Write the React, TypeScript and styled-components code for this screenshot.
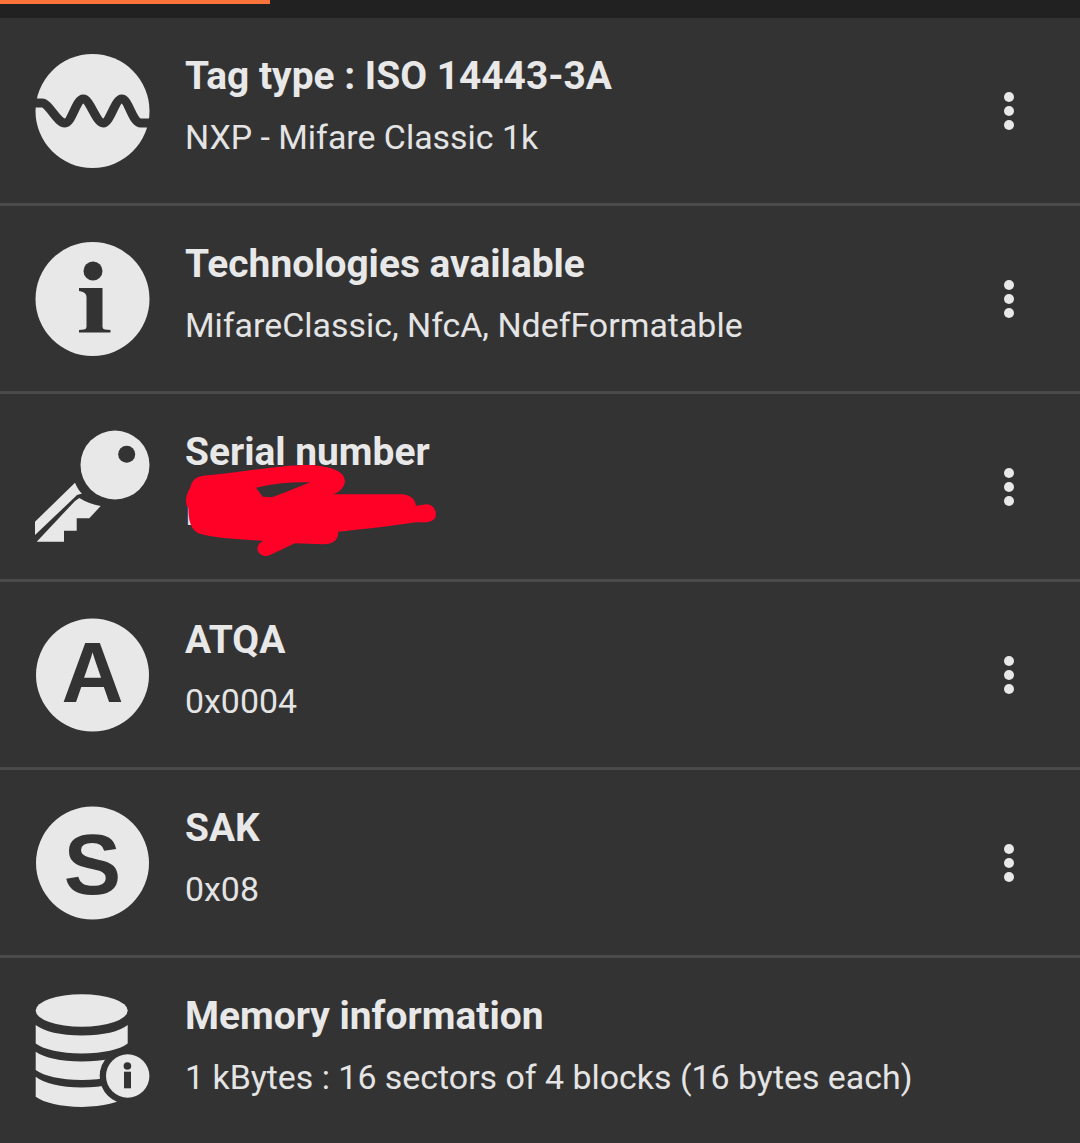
import React from 'react';
import styled, { createGlobalStyle } from 'styled-components';

const ICON_LIGHT = '#e8e8e8';
const BG = '#333333';

const GlobalStyle = createGlobalStyle`
  html, body {
    margin: 0;
    padding: 0;
    background: ${BG};
  }
  * {
    box-sizing: border-box;
  }
`;

const WaveIcon = () => (
  <svg width="116" height="116" viewBox="0 0 116 116">
    <circle cx="57.5" cy="57" r="57" fill={ICON_LIGHT} />
    <path
      d="M-3 49 H7 C14 49 22 69 30 69 C37 69 41 45 48.3 45 C55 45 61 69 68.3 69 C75 69 80 45 86.7 45 C94 45 97 69 106 69 H119"
      fill="none"
      stroke={BG}
      strokeWidth="9"
    />
  </svg>
);

const InfoIcon = () => (
  <svg width="116" height="116" viewBox="0 0 116 116">
    <circle cx="57.5" cy="57" r="57" fill={ICON_LIGHT} />
    <circle cx="58" cy="29" r="9.5" fill={BG} />
    <path
      d="M44 46 H67.5 V85 Q67.5 87 70 87.5 L75.5 88 V90.5 H44 V88 L49 87.5 Q51.5 87 51.5 85 V55 Q51.5 50 44 49 Z"
      fill={BG}
    />
  </svg>
);

const KeyIcon = () => (
  <svg width="116" height="116" viewBox="0 0 116 116">
    <circle cx="80" cy="35" r="34.5" fill={ICON_LIGHT} />
    <circle cx="91.7" cy="24.3" r="8.5" fill={BG} />
    <path d="M0 91.7 L40 52.7 Q43 60 47 63.5 L42 65 L40 67 L0 105 Z" fill={ICON_LIGHT} />
    <path
      d="M1.7 111.7 L40 71 L44.3 68 Q54 74 65.7 76 L54.3 88.3 H41.7 V100.7 H29 V111.7 Z"
      fill={ICON_LIGHT}
    />
  </svg>
);

const LetterIcon = ({ letter, baseline }: { letter: string; baseline: number }) => (
  <svg width="116" height="116" viewBox="0 0 116 116">
    <circle cx="57.5" cy="57" r="56.5" fill={ICON_LIGHT} />
    <text
      x="57.5"
      y={baseline}
      textAnchor="middle"
      fontFamily="'Liberation Sans', Arial, sans-serif"
      fontWeight="700"
      fontSize="86"
      fill={BG}
    >
      {letter}
    </text>
  </svg>
);

const DatabaseIcon = () => (
  <svg width="116" height="116" viewBox="0 0 116 116">
    <ellipse cx="46.7" cy="16.5" rx="46" ry="16.2" fill={ICON_LIGHT} />
    <path d="M0.7 31 Q14 41 46.7 41.5 Q80 41 92.7 31 V49.5 Q80 59 46.7 59.5 Q14 59 0.7 49.5 Z" fill={ICON_LIGHT} />
    <path d="M0.7 57.7 Q14 67 46.7 67.5 Q80 67 92.7 57.7 V76 Q80 85.5 46.7 86 Q14 85.5 0.7 76 Z" fill={ICON_LIGHT} />
    <path d="M0.7 82.7 Q14 93 46.7 93.5 Q80 93 92.7 82.7 V102 Q80 112 46.7 113 Q14 112 0.7 102.7 Z" fill={ICON_LIGHT} />
    <circle cx="92.7" cy="82" r="28" fill={BG} />
    <circle cx="92.7" cy="82" r="21.7" fill={ICON_LIGHT} />
    <circle cx="92.4" cy="72" r="3.8" fill={BG} />
    <rect x="89" y="77.7" width="7" height="16.6" fill={BG} />
  </svg>
);

type Item = {
  icon: React.ReactNode;
  title: string;
  value: string;
  redacted?: boolean;
  noMenu?: boolean;
};

const items: Item[] = [
  { icon: <WaveIcon />, title: 'Tag type : ISO 14443-3A', value: 'NXP - Mifare Classic 1k' },
  { icon: <InfoIcon />, title: 'Technologies available', value: 'MifareClassic, NfcA, NdefFormatable' },
  { icon: <KeyIcon />, title: 'Serial number', value: 'I', redacted: true },
  { icon: <LetterIcon letter="A" baseline={84} />, title: 'ATQA', value: '0x0004' },
  { icon: <LetterIcon letter="S" baseline={88} />, title: 'SAK', value: '0x08' },
  {
    icon: <DatabaseIcon />,
    title: 'Memory information',
    value: '1 kBytes : 16 sectors of 4 blocks (16 bytes each)',
    noMenu: true,
  },
];

const App = () => (
  <>
    <GlobalStyle />
    <Page>
      <TopBar>
        <Progress />
      </TopBar>
      {items.map(item => (
        <Row key={item.title}>
          <IconBox>{item.icon}</IconBox>
          <TextCol>
            <Title>{item.title}</Title>
            <Value>{item.value}</Value>
          </TextCol>
          {!item.noMenu && (
            <Menu>
              <Dot />
              <Dot />
              <Dot />
            </Menu>
          )}
          {item.redacted && (
            <Scribble viewBox="0 0 870 420">
              <path
                fillRule="evenodd"
                d="M60 190 Q65 155 100 152 C200 145 320 120 420 120 C490 125 525 140 525 170 C520 195 500 205 485 208 L700 208 C725 212 735 225 738 242 L770 238 C795 240 802 265 795 280 C785 292 770 293 740 292 C650 305 560 315 505 320 C505 345 490 357 460 358 L375 355 L300 390 C280 400 262 385 262 370 C265 355 275 350 280 348 C200 342 130 340 85 325 C65 315 55 290 55 250 C45 235 45 215 60 190 Z M258 188 C310 175 370 170 420 172 C390 185 340 205 305 217 L278 215 Z"
              />
            </Scribble>
          )}
        </Row>
      ))}
    </Page>
  </>
);

export default App;

const Page = styled.div`
  width: 1080px;
  height: 1143px;
  overflow: hidden;
  background: ${BG};
  font-family: Roboto, 'Liberation Sans', sans-serif;
`;

const TopBar = styled.div`
  height: 18px;
  background: #212121;
`;

const Progress = styled.div`
  width: 270px;
  height: 4px;
  background: #f9733a;
`;

const Row = styled.div`
  position: relative;
  display: flex;
  align-items: center;
  height: 188px;
  padding-left: 35px;
  border-bottom: 3px solid #4a4a4a;

  &:last-child {
    border-bottom-color: transparent;
  }
`;

const IconBox = styled.div`
  display: flex;
  flex: none;
  width: 116px;
  height: 116px;
  margin-top: 3px;
`;

const TextCol = styled.div`
  display: flex;
  flex: 1;
  flex-direction: column;
  gap: 20px;
  margin-left: 34px;
  margin-top: -11px;
`;

const Title = styled.div`
  font-size: 38.9px;
  font-weight: 700;
  line-height: 46px;
  color: #e8e8e8;
`;

const Value = styled.div`
  font-size: 33.9px;
  font-weight: 400;
  line-height: 40px;
  margin-top: -1px;
  color: #e4e4e4;
`;

const Menu = styled.div`
  display: flex;
  flex: none;
  flex-direction: column;
  gap: 4px;
  margin-right: 66px;
`;

const Dot = styled.span`
  display: block;
  width: 10px;
  height: 10px;
  border-radius: 50%;
  background: #e8e8e8;
`;

const Scribble = styled.svg`
  position: absolute;
  left: 170px;
  top: 31px;
  width: 290px;
  height: 140px;
  fill: #ff0027;
`;
